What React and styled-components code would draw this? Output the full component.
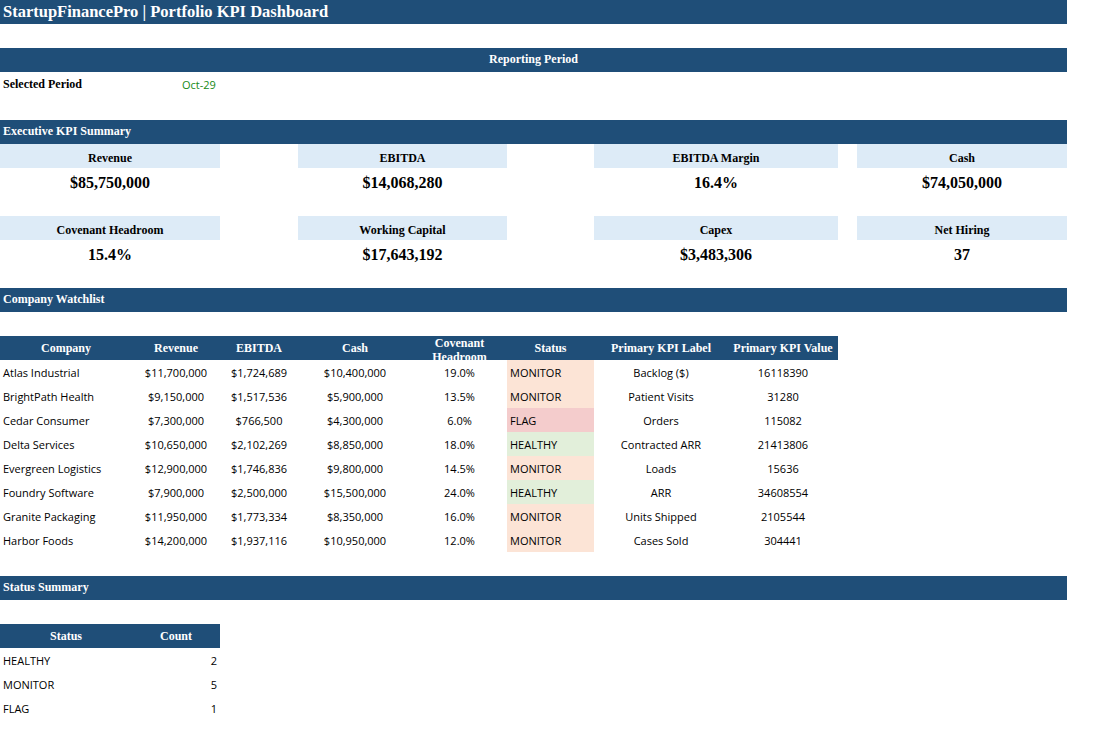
import React from 'react';
import styled, { createGlobalStyle } from 'styled-components';

const Global = createGlobalStyle`
  body { margin: 0; background: #fff; font-family: "Open Sans", "Liberation Sans", sans-serif; }
`;

const COLS = '132px 88px 78px 114px 95px 87px 134px 110px 19px 210px';

const Sheet = styled.div`
  display: grid;
  grid-template-columns: ${COLS};
  grid-auto-rows: 24px;
  width: 1067px;
`;

const Bar = styled.div`
  grid-column: 1 / -1;
  background: #1f4e78;
  color: #fff;
  font-family: "Liberation Serif", "DejaVu Serif", serif;
  font-weight: bold;
  font-size: ${p => (p.$big ? '16.5px' : '12px')};
  display: flex;
  align-items: ${p => (p.$big ? 'center' : 'flex-end')};
  justify-content: ${p => (p.$center ? 'center' : 'flex-start')};
  padding: 0 3px ${p => (p.$big ? '0' : '5px')};
`;

const Blank = styled.div`
  grid-column: 1 / -1;
`;

const Cell = styled.div`
  grid-column: ${p => p.$span || 'auto'};
  display: flex;
  align-items: flex-end;
  justify-content: ${p => p.$align || 'flex-start'};
  padding: 0 3px 4px;
  font-size: 11px;
  color: ${p => p.$color || '#000'};
  background: ${p => p.$bg || 'transparent'};
  white-space: nowrap;
  overflow: hidden;
`;

const Label = styled(Cell)`
  font-family: "Liberation Serif", "DejaVu Serif", serif;
  font-weight: bold;
  font-size: 12px;
`;

const KpiHead = styled.div`
  grid-column: ${p => p.$span};
  background: #ddebf7;
  font-family: "Liberation Serif", "DejaVu Serif", serif;
  font-weight: bold;
  font-size: 12px;
  display: flex;
  align-items: flex-end;
  justify-content: center;
  padding-bottom: 2px;
`;

const KpiValue = styled(KpiHead)`
  background: transparent;
  font-size: 16px;
  padding-bottom: 0;
`;

const Th = styled.div`
  grid-column: ${p => p.$span || 'auto'};
  background: #1f4e78;
  color: #fff;
  font-family: "Liberation Serif", "DejaVu Serif", serif;
  font-weight: bold;
  font-size: 12px;
  line-height: 14px;
  display: flex;
  align-items: ${p => (p.$wrap ? 'flex-start' : 'center')};
  justify-content: center;
  text-align: center;
  overflow: hidden;
  padding-top: ${p => (p.$wrap ? '0' : '0')};
`;

const Gap = styled.div`
  grid-column: ${p => p.$span};
`;

const STATUS_BG = { MONITOR: '#fce4d6', FLAG: '#f4cccc', HEALTHY: '#e2efda' };

const kpis = [
  ['Revenue', '$85,750,000', 'EBITDA', '$14,068,280', 'EBITDA Margin', '16.4%', 'Cash', '$74,050,000'],
  ['Covenant Headroom', '15.4%', 'Working Capital', '$17,643,192', 'Capex', '$3,483,306', 'Net Hiring', '37'],
];
const spans = ['1 / 3', '4 / 6', '7 / 9', '10 / 11'];
const gaps = ['3 / 4', '6 / 7', '9 / 10'];

const rows = [
  ['Atlas Industrial', '$11,700,000', '$1,724,689', '$10,400,000', '19.0%', 'MONITOR', 'Backlog ($)', '16118390'],
  ['BrightPath Health', '$9,150,000', '$1,517,536', '$5,900,000', '13.5%', 'MONITOR', 'Patient Visits', '31280'],
  ['Cedar Consumer', '$7,300,000', '$766,500', '$4,300,000', '6.0%', 'FLAG', 'Orders', '115082'],
  ['Delta Services', '$10,650,000', '$2,102,269', '$8,850,000', '18.0%', 'HEALTHY', 'Contracted ARR', '21413806'],
  ['Evergreen Logistics', '$12,900,000', '$1,746,836', '$9,800,000', '14.5%', 'MONITOR', 'Loads', '15636'],
  ['Foundry Software', '$7,900,000', '$2,500,000', '$15,500,000', '24.0%', 'HEALTHY', 'ARR', '34608554'],
  ['Granite Packaging', '$11,950,000', '$1,773,334', '$8,350,000', '16.0%', 'MONITOR', 'Units Shipped', '2105544'],
  ['Harbor Foods', '$14,200,000', '$1,937,116', '$10,950,000', '12.0%', 'MONITOR', 'Cases Sold', '304441'],
];

const summary = [['HEALTHY', 2], ['MONITOR', 5], ['FLAG', 1]];

function KpiRow({ items, Comp }) {
  return spans.map((s, j) => (
    <React.Fragment key={s}>
      <Comp $span={s}>{items[j]}</Comp>
      {gaps[j] && <Gap $span={gaps[j]} />}
    </React.Fragment>
  ));
}

export default function App() {
  return (
    <>
      <Global />
      <Sheet>
        <Bar $big>StartupFinancePro | Portfolio KPI Dashboard</Bar>
        <Blank />
        <Bar $center>Reporting Period</Bar>
        <Label>Selected Period</Label>
        <Cell $span="2 / 4" $color="#168a16" style={{ paddingLeft: 50 }}>Oct-29</Cell>
        <Gap $span="4 / -1" />
        <Blank />
        <Bar>Executive KPI Summary</Bar>
        {kpis.map((k, i) => (
          <React.Fragment key={i}>
            <KpiRow items={[k[0], k[2], k[4], k[6]]} Comp={KpiHead} />
            <KpiRow items={[k[1], k[3], k[5], k[7]]} Comp={KpiValue} />
            <Blank />
          </React.Fragment>
        ))}
        <Bar>Company Watchlist</Bar>
        <Blank />
        {['Company', 'Revenue', 'EBITDA', 'Cash', 'Covenant Headroom', 'Status', 'Primary KPI Label', 'Primary KPI Value'].map(h => (
          <Th key={h} $wrap={h === 'Covenant Headroom'}>{h}</Th>
        ))}
        <Gap $span="9 / -1" />
        {rows.map(r => (
          <React.Fragment key={r[0]}>
            <Cell>{r[0]}</Cell>
            <Cell $align="center">{r[1]}</Cell>
            <Cell $align="center">{r[2]}</Cell>
            <Cell $align="center">{r[3]}</Cell>
            <Cell $align="center">{r[4]}</Cell>
            <Cell $bg={STATUS_BG[r[5]]}>{r[5]}</Cell>
            <Cell $align="center">{r[6]}</Cell>
            <Cell $align="center">{r[7]}</Cell>
            <Gap $span="9 / -1" />
          </React.Fragment>
        ))}
        <Blank />
        <Bar>Status Summary</Bar>
        <Blank />
        <Th>Status</Th>
        <Th>Count</Th>
        <Gap $span="3 / -1" />
        {summary.map(([s, c]) => (
          <React.Fragment key={s}>
            <Cell>{s}</Cell>
            <Cell $align="flex-end">{c}</Cell>
            <Gap $span="3 / -1" />
          </React.Fragment>
        ))}
      </Sheet>
    </>
  );
}
